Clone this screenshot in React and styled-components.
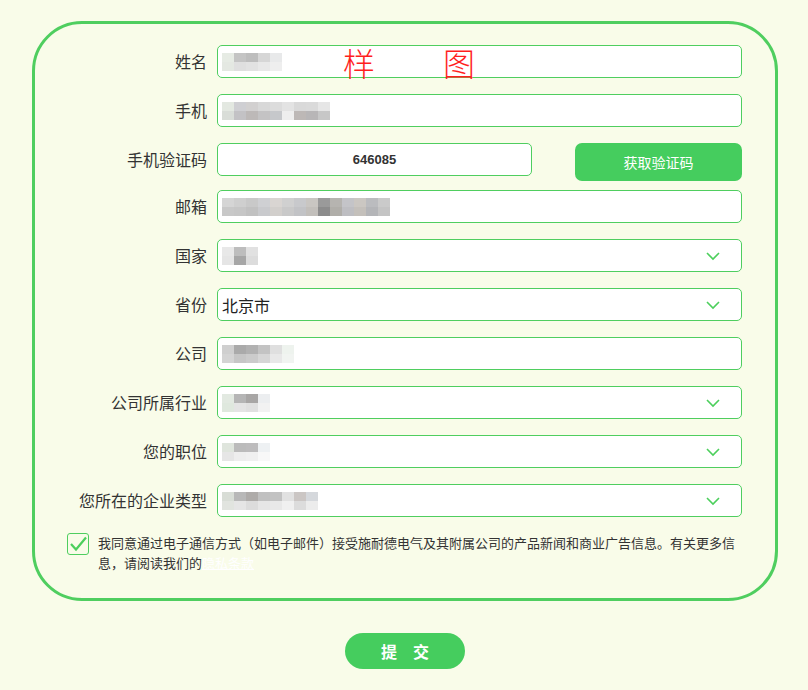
import React from 'react';
import styled, { createGlobalStyle } from 'styled-components';

const GlobalStyle = createGlobalStyle`
  html, body {
    margin: 0;
    padding: 0;
    background: #f9fce9;
  }
  body {
    font-family: "Noto Sans CJK SC", "Noto Sans", sans-serif;
    color: #333;
  }
`;

const fields = [
  { label: '姓名', mosaic: [['#e6ebe4', '#e4e8e2'], ['#c4c4c4', '#dfdfdf'], ['#bdbdbd', '#e2e2e2'], ['#d6d6d6', '#e8e8e8'], ['#e8e9ea', '#eeeeee']] },
  { label: '手机', mosaic: [['#e3e8e1', '#d9ddd8'], ['#cfcfd3', '#c3c2c5'], ['#d2d0d0', '#bdb9b8'], ['#d8d8d8', '#c4c3c4'], ['#dcdcdc', '#c6c8cb'], ['#e3e3e3', '#eeeeee'], ['#d9d9d9', '#bdb8b6'], ['#dadada', '#b8b6b7'], ['#e6e6e6', '#c7c7c7']] },
  { label: '手机验证码', code: '646085' },
  { label: '邮箱', tight: true, mosaic: [['#d5d5d5', '#c8c8c8'], ['#cfcfcf', '#c6c6c6'], ['#c9c9c9', '#c1c1c1'], ['#cfd0d3', '#c9cacd'], ['#d9d5d2', '#d2cfcc'], ['#d0d0d0', '#c9c9c9'], ['#c8c9cc', '#c2c3c6'], ['#c9c6c2', '#c2bfbb'], ['#9a9a9a', '#8c8c8c'], ['#b6b4b0', '#b0aea9'], ['#c4c4c8', '#bebec2'], ['#cbc7c2', '#c4c0bb'], ['#bbbcbf', '#b4b5b8'], ['#cacaca', '#c4c4c4']] },
  { label: '国家', select: true, mosaic: [['#e8e8e8', '#e5e5e5'], ['#bdbdbd', '#a6a6a6'], ['#e1e1e1', '#dcdcdc']] },
  { label: '省份', select: true, value: '北京市' },
  { label: '公司', mosaic: [['#cfcfcf', '#d4d4d4'], ['#aaaaaa', '#c6c6c6'], ['#b1b1b1', '#cbcbcb'], ['#c3c3c3', '#d6d6d6'], ['#dfdfdf', '#e8e8e8'], ['#eef3ee', '#f1f4f1']] },
  { label: '公司所属行业', select: true, mosaic: [['#e2e9e1', '#dfe8de'], ['#b5b5b5', '#e4e4e4'], ['#a8a6a5', '#e0e0e0'], ['#eceef0', '#f2f2f2']] },
  { label: '您的职位', select: true, mosaic: [['#dfe5dd', '#e6e6e6'], ['#bbbbbb', '#eeeeee'], ['#bdbcbd', '#f0f0f0'], ['#eef1f3', '#f8f8f8']] },
  { label: '您所在的企业类型', select: true, mosaic: [['#d8ddd6', '#e1e4df'], ['#b8b8b8', '#e5e5e5'], ['#aeaba9', '#dcdcdc'], ['#c0c0c0', '#e6e6e6'], ['#c2c2c2', '#e8e8e8'], ['#e1e1e1', '#f0f0f0'], ['#cbc6c4', '#dcdcdc'], ['#d5d8dc', '#ececec']] },
];

function Mosaic({ cells }) {
  return (
    <MosaicWrap>
      {cells.map((c, i) => (
        <MosaicCol key={i}>
          <MosaicCell $color={c[0]} />
          <MosaicCell $color={c[1]} />
        </MosaicCol>
      ))}
    </MosaicWrap>
  );
}

function Chevron() {
  return (
    <ChevronIcon width="16" height="10" viewBox="0 0 16 10">
      <path d="M2 2 L8 8 L14 2" fill="none" stroke="#4ccf5c" strokeWidth="1.6" />
    </ChevronIcon>
  );
}

function FieldRow({ field, first }) {
  if (field.code) {
    return (
      <Row>
        <Label>{field.label}</Label>
        <CodeGroup>
          <Box $center>
            <CodeText>{field.code}</CodeText>
          </Box>
          <CodeButton type="button">获取验证码</CodeButton>
        </CodeGroup>
      </Row>
    );
  }
  return (
    <Row $first={first} $tight={field.tight}>
      <Label>{field.label}</Label>
      <Box>
        {field.value && <Value>{field.value}</Value>}
        {field.mosaic && <Mosaic cells={field.mosaic} />}
        {field.select && <Chevron />}
      </Box>
    </Row>
  );
}

export default function App() {
  return (
    <Page>
      <GlobalStyle />
      <Card>
        <Watermark>
          <span>样</span>
          <span>图</span>
        </Watermark>
        {fields.map((f, i) => (
          <FieldRow key={f.label} field={f} first={i === 0} />
        ))}
        <Consent>
          <CheckBox>
            <svg width="20" height="20" viewBox="0 0 20 20">
              <path d="M3 10 L8 15.5 L18 3.5" fill="none" stroke="#4ccf5c" strokeWidth="2.2" />
            </svg>
          </CheckBox>
          <ConsentText>
            我同意通过电子通信方式（如电子邮件）接受施耐德电气及其附属公司的产品新闻和商业广告信息。有关更多信息，请阅读我们的
            <PrivacyLink>隐私条款</PrivacyLink>
          </ConsentText>
        </Consent>
      </Card>
      <SubmitWrap>
        <SubmitButton type="button">提　交</SubmitButton>
      </SubmitWrap>
    </Page>
  );
}

const Page = styled.div`
  width: 808px;
  height: 690px;
  padding-top: 21px;
  box-sizing: border-box;
`;

const Card = styled.div`
  position: relative;
  margin-left: 32px;
  width: 746px;
  height: 580px;
  box-sizing: border-box;
  border: 3px solid #4fce5f;
  border-radius: 50px;
  padding: 21px 33px 0 32px;
  display: flex;
  flex-direction: column;
`;

const Watermark = styled.div`
  position: absolute;
  left: 308px;
  top: 20px;
  z-index: 1;
  display: flex;
  gap: 68px;
  color: #ff1e1e;
  font-size: 32px;
  font-weight: 300;
  line-height: 36px;
  pointer-events: none;
`;

const Row = styled.div`
  display: grid;
  grid-template-columns: 140px 525px;
  column-gap: 10px;
  align-items: start;
  margin-top: ${(p) => (p.$first ? '0' : p.$tight ? '9px' : '16px')};
`;

const Label = styled.div`
  text-align: right;
  font-size: 16px;
  line-height: 33px;
  color: #333;
  white-space: nowrap;
`;

const Box = styled.div`
  position: relative;
  height: 33px;
  box-sizing: border-box;
  border: 1px solid #4fce5f;
  border-radius: 5px;
  background: #fff;
  display: flex;
  align-items: center;
  justify-content: ${(p) => (p.$center ? 'center' : 'flex-start')};
  padding: 0 4px;
`;

const Value = styled.span`
  font-size: 16px;
  color: #222;
`;

const CodeGroup = styled.div`
  display: grid;
  grid-template-columns: 315px 167px;
  column-gap: 43px;
  align-items: start;
`;

const CodeText = styled.span`
  font-family: "Liberation Sans", Arial, sans-serif;
  font-weight: bold;
  font-size: 13px;
  color: #333;
`;

const CodeButton = styled.button`
  height: 38px;
  border: none;
  border-radius: 7px;
  background: #45cd5e;
  color: #fff;
  font-family: "Noto Sans CJK SC", sans-serif;
  font-size: 14px;
  cursor: pointer;
`;

const MosaicWrap = styled.div`
  display: flex;
  filter: blur(0.5px);
`;

const MosaicCol = styled.div`
  display: flex;
  flex-direction: column;
`;

const MosaicCell = styled.div`
  width: 12px;
  height: 9px;
  background: ${(p) => p.$color};
`;

const ChevronIcon = styled.svg`
  position: absolute;
  right: 20px;
  top: 11px;
`;

const Consent = styled.div`
  display: flex;
  align-items: flex-start;
  gap: 9px;
  margin-top: 16px;
`;

const CheckBox = styled.div`
  flex: none;
  width: 22px;
  height: 22px;
  box-sizing: border-box;
  border: 1px solid #4fce5f;
  border-radius: 3px;
  display: flex;
  align-items: center;
  justify-content: center;
`;

const ConsentText = styled.div`
  width: 644px;
  font-size: 13px;
  line-height: 20px;
  color: #333;
`;

const PrivacyLink = styled.a`
  color: #fff;
  text-decoration: underline;
`;

const SubmitWrap = styled.div`
  display: flex;
  justify-content: center;
  padding-left: 2px;
  margin-top: 32px;
`;

const SubmitButton = styled.button`
  width: 120px;
  height: 36px;
  border: none;
  border-radius: 18px;
  background: #45cd5e;
  color: #fff;
  font-family: "Noto Sans CJK SC", sans-serif;
  font-size: 16px;
  font-weight: bold;
  cursor: pointer;
`;
